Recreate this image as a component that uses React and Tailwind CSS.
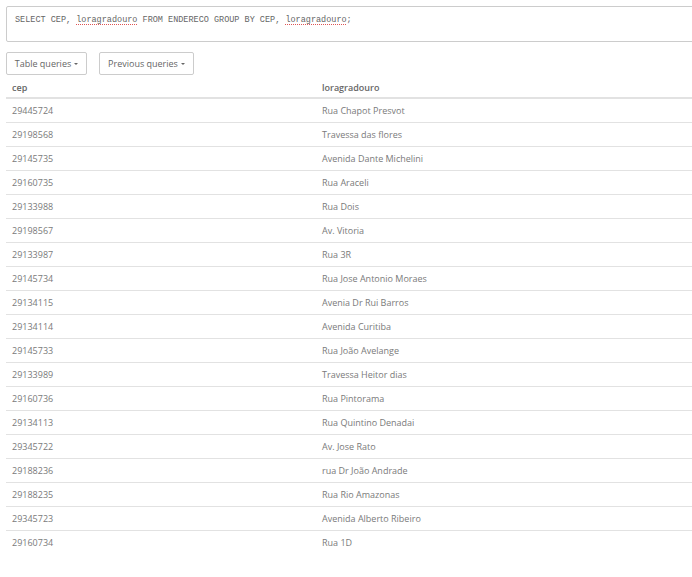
import React from 'react';

const rows = [
  ['29445724', 'Rua Chapot Presvot'],
  ['29198568', 'Travessa das flores'],
  ['29145735', 'Avenida Dante Michelini'],
  ['29160735', 'Rua Araceli'],
  ['29133988', 'Rua Dois'],
  ['29198567', 'Av. Vitoria'],
  ['29133987', 'Rua 3R'],
  ['29145734', 'Rua Jose Antonio Moraes'],
  ['29134115', 'Avenia Dr Rui Barros'],
  ['29134114', 'Avenida Curitiba'],
  ['29145733', 'Rua João Avelange'],
  ['29133989', 'Travessa Heitor dias'],
  ['29160736', 'Rua Pintorama'],
  ['29134113', 'Rua Quintino Denadai'],
  ['29345722', 'Av. Jose Rato'],
  ['29188236', 'rua Dr João Andrade'],
  ['29188235', 'Rua Rio Amazonas'],
  ['29345723', 'Avenida Alberto Ribeiro'],
  ['29160734', 'Rua 1D'],
];

const Caret = () => (
  <span className="ml-[3px] inline-block w-0 h-0 border-x-[2.5px] border-x-transparent border-t-[2.5px] border-t-[#666] align-middle" />
);

const Spell = ({ children }) => (
  <span className="underline decoration-dotted decoration-[#d55] decoration-1 underline-offset-2">{children}</span>
);

export default function App() {
  return (
    <div className="w-[692px] h-[577px] overflow-hidden bg-white text-[#7a7a7a]" style={{ fontFamily: '"Open Sans", sans-serif' }}>
      <div className="pl-[6px] pt-[6px]">
        <div className="w-[700px] h-[36px] border border-[#ccc] rounded-[2px] px-[8px] pt-[7px] text-[8.5px] text-[#666]" style={{ fontFamily: '"Liberation Mono", monospace' }}>
          SELECT CEP, <Spell>loragradouro</Spell> FROM ENDERECO GROUP BY CEP, <Spell>loragradouro</Spell>;
        </div>
        <div className="flex gap-[12px] mt-[10px]">
          <button className="h-[23px] w-[81px] border border-[#ccc] rounded-[2px] bg-white text-[9px] text-[#666] flex items-center justify-center">
            Table queries<Caret />
          </button>
          <button className="h-[23px] w-[95px] border border-[#ccc] rounded-[2px] bg-white text-[9px] text-[#666] flex items-center justify-center">
            Previous queries<Caret />
          </button>
        </div>
        <div className="mt-[1px] w-[700px] text-[9px]">
          <div className="grid grid-cols-[316px_1fr] h-[23px] items-center border-b-2 border-[#e2e2e2] font-semibold text-[#666]">
            <div className="pl-[6px] pt-[3px]">cep</div>
            <div className="pt-[3px]">loragradouro</div>
          </div>
          {rows.map((r, i) => (
            <div key={i} className={`grid grid-cols-[316px_1fr] h-[24px] items-center ${i < rows.length - 1 ? 'border-b' : ''} border-[#e2e2e2]`}>
              <div className="pl-[6px]">{r[0]}</div>
              <div>{r[1]}</div>
            </div>
          ))}
        </div>
      </div>
    </div>
  );
}
